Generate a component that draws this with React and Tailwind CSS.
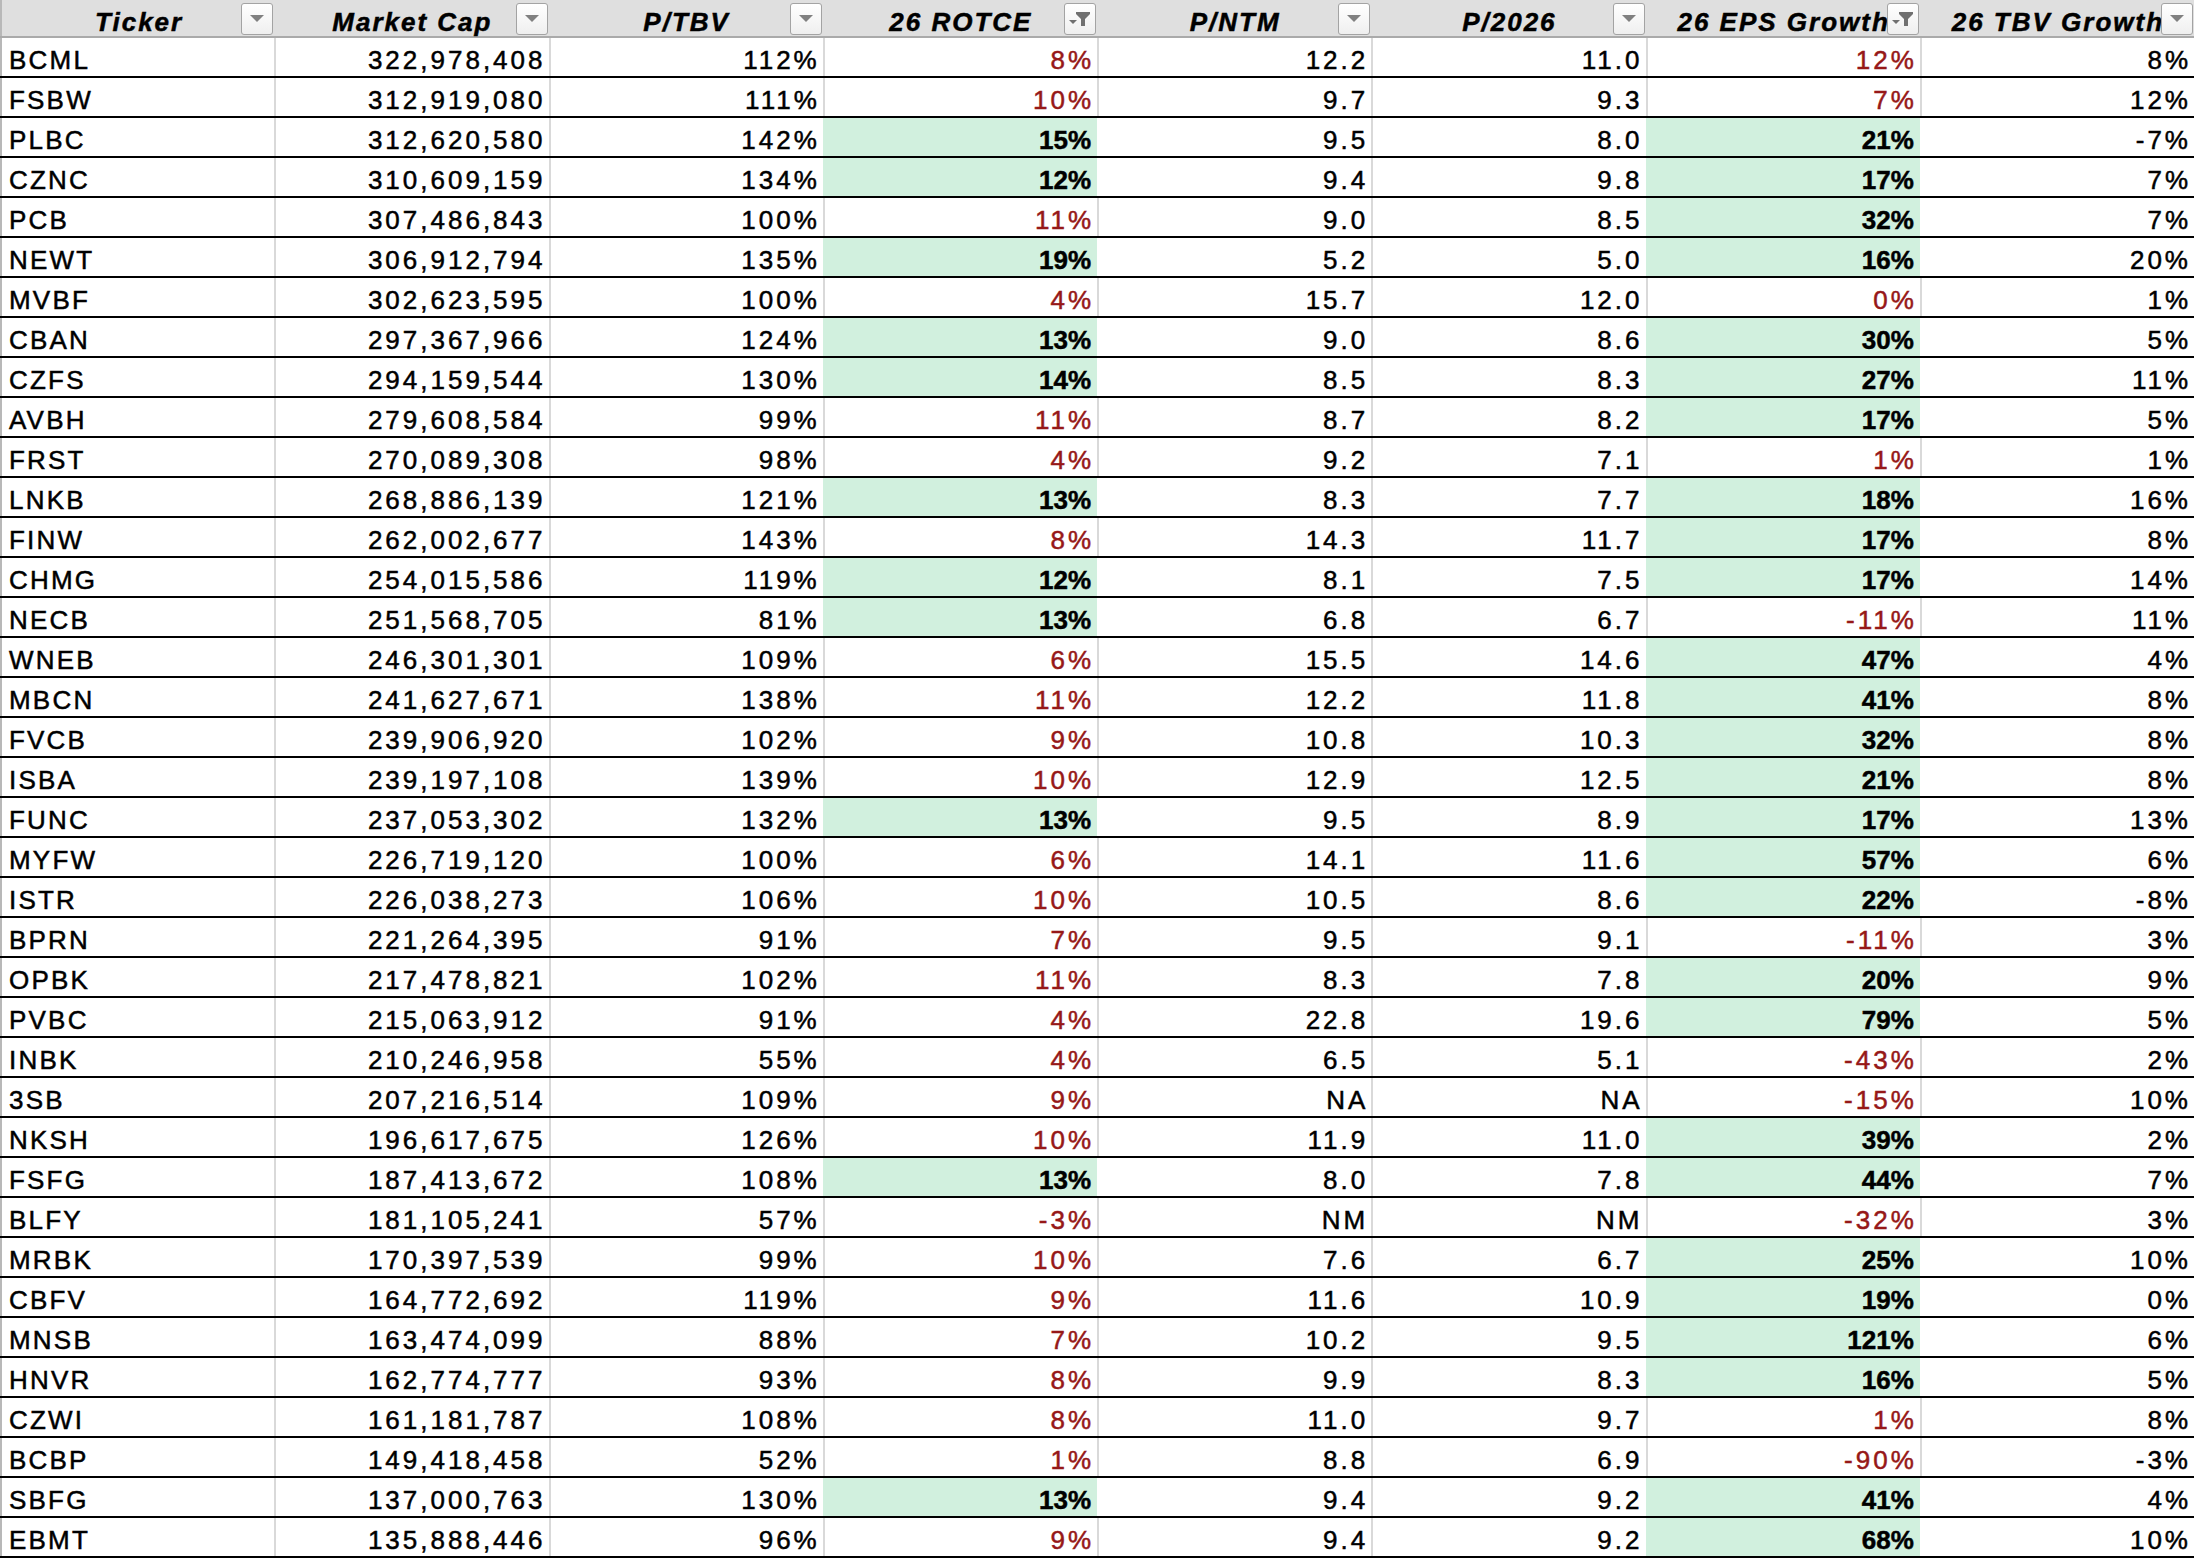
import React from "react";

const headers = [
  { label: "Ticker" },
  { label: "Market Cap" },
  { label: "P/TBV" },
  { label: "26 ROTCE", filtered: true },
  { label: "P/NTM" },
  { label: "P/2026" },
  { label: "26 EPS Growth", filtered: true },
  { label: "26 TBV Growth" },
];

// ticker, market cap, p/tbv, rotce, p/ntm, p/2026, eps growth, tbv growth
const rows = [
  ["BCML", "322,978,408", "112%", 8, "12.2", "11.0", 12, "8%"],
  ["FSBW", "312,919,080", "111%", 10, "9.7", "9.3", 7, "12%"],
  ["PLBC", "312,620,580", "142%", 15, "9.5", "8.0", 21, "-7%"],
  ["CZNC", "310,609,159", "134%", 12, "9.4", "9.8", 17, "7%"],
  ["PCB", "307,486,843", "100%", 11, "9.0", "8.5", 32, "7%"],
  ["NEWT", "306,912,794", "135%", 19, "5.2", "5.0", 16, "20%"],
  ["MVBF", "302,623,595", "100%", 4, "15.7", "12.0", 0, "1%"],
  ["CBAN", "297,367,966", "124%", 13, "9.0", "8.6", 30, "5%"],
  ["CZFS", "294,159,544", "130%", 14, "8.5", "8.3", 27, "11%"],
  ["AVBH", "279,608,584", "99%", 11, "8.7", "8.2", 17, "5%"],
  ["FRST", "270,089,308", "98%", 4, "9.2", "7.1", 1, "1%"],
  ["LNKB", "268,886,139", "121%", 13, "8.3", "7.7", 18, "16%"],
  ["FINW", "262,002,677", "143%", 8, "14.3", "11.7", 17, "8%"],
  ["CHMG", "254,015,586", "119%", 12, "8.1", "7.5", 17, "14%"],
  ["NECB", "251,568,705", "81%", 13, "6.8", "6.7", -11, "11%"],
  ["WNEB", "246,301,301", "109%", 6, "15.5", "14.6", 47, "4%"],
  ["MBCN", "241,627,671", "138%", 11, "12.2", "11.8", 41, "8%"],
  ["FVCB", "239,906,920", "102%", 9, "10.8", "10.3", 32, "8%"],
  ["ISBA", "239,197,108", "139%", 10, "12.9", "12.5", 21, "8%"],
  ["FUNC", "237,053,302", "132%", 13, "9.5", "8.9", 17, "13%"],
  ["MYFW", "226,719,120", "100%", 6, "14.1", "11.6", 57, "6%"],
  ["ISTR", "226,038,273", "106%", 10, "10.5", "8.6", 22, "-8%"],
  ["BPRN", "221,264,395", "91%", 7, "9.5", "9.1", -11, "3%"],
  ["OPBK", "217,478,821", "102%", 11, "8.3", "7.8", 20, "9%"],
  ["PVBC", "215,063,912", "91%", 4, "22.8", "19.6", 79, "5%"],
  ["INBK", "210,246,958", "55%", 4, "6.5", "5.1", -43, "2%"],
  ["3SB", "207,216,514", "109%", 9, "NA", "NA", -15, "10%"],
  ["NKSH", "196,617,675", "126%", 10, "11.9", "11.0", 39, "2%"],
  ["FSFG", "187,413,672", "108%", 13, "8.0", "7.8", 44, "7%"],
  ["BLFY", "181,105,241", "57%", -3, "NM", "NM", -32, "3%"],
  ["MRBK", "170,397,539", "99%", 10, "7.6", "6.7", 25, "10%"],
  ["CBFV", "164,772,692", "119%", 9, "11.6", "10.9", 19, "0%"],
  ["MNSB", "163,474,099", "88%", 7, "10.2", "9.5", 121, "6%"],
  ["HNVR", "162,774,777", "93%", 8, "9.9", "8.3", 16, "5%"],
  ["CZWI", "161,181,787", "108%", 8, "11.0", "9.7", 1, "8%"],
  ["BCBP", "149,418,458", "52%", 1, "8.8", "6.9", -90, "-3%"],
  ["SBFG", "137,000,763", "130%", 13, "9.4", "9.2", 41, "4%"],
  ["EBMT", "135,888,446", "96%", 9, "9.4", "9.2", 68, "10%"],
];

function DropButton({ filtered }) {
  return (
    <div className="absolute right-[1px] top-[3px] z-10 flex h-[32px] w-[32px] items-center justify-center rounded-[3px] border border-[#a3a3a3] bg-gradient-to-b from-white to-[#efefef]">
      {filtered ? (
        <svg width="24" height="18" viewBox="0 0 24 18">
          <polygon points="1,10 9,10 5,14" fill="#707070" />
          <polygon points="8,2 22,2 22,4 17,9 17,16 13,16 13,9 8,4" fill="#707070" />
        </svg>
      ) : (
        <svg width="14" height="8" viewBox="0 0 14 8">
          <polygon points="0,0 14,0 7,7" fill="#808080" />
        </svg>
      )}
    </div>
  );
}

function Header() {
  return (
    <div className="grid h-[38px] grid-cols-8 border-b-2 border-[#aaaaaa] bg-[#dfdfdf]">
      {headers.map((h, i) => (
        <div
          key={h.label}
          className={`relative flex items-end justify-center whitespace-nowrap pb-[1px] text-[26px] font-bold italic leading-[26px] tracking-[2px] text-black [-webkit-text-stroke-width:0.5px] ${
            i === 0 ? "border-l-2 border-[#b8b8b8]" : ""
          }`}
        >
          <span className="pl-[2px]">{h.label}</span>
          <DropButton filtered={h.filtered} />
        </div>
      ))}
    </div>
  );
}

function Cell({ children, kind, first, afterGreen }) {
  let border = "border-l-2 border-[#d9d9d9]";
  if (first) border = "border-l-2 border-[#b8b8b8]";
  else if (kind === "green") border = "border-l-2 border-[#d1f0de]";
  else if (afterGreen) border = "border-l-2 border-white";

  let tone = "bg-white text-black font-normal tracking-[3px] pr-[3px]";
  if (kind === "green") tone = "bg-[#d1f0de] text-black font-bold tracking-[0px] pr-[6px]";
  if (kind === "red") tone = "bg-white text-[#961818] font-normal tracking-[3px] pr-[3px]";
  if (first) tone = "bg-white text-black font-normal tracking-[2.2px] pl-[7px]";

  return (
    <div
      className={`flex items-end whitespace-nowrap pb-[3px] text-[26px] leading-[26px] [-webkit-text-stroke-width:0.5px] ${
        first ? "justify-start" : "justify-end"
      } ${border} ${tone}`}
    >
      {children}
    </div>
  );
}

export default function App() {
  return (
    <div className="w-[2194px] bg-white font-['Liberation_Sans',Arial,sans-serif]">
      <Header />
      {rows.map((r) => {
        const [ticker, cap, ptbv, rotce, pntm, p26, eps, tbv] = r;
        const rotceKind = rotce >= 12 ? "green" : "red";
        const epsKind = eps >= 15 ? "green" : "red";
        return (
          <div key={ticker} className="grid h-[40px] grid-cols-8 border-b-2 border-black">
            <Cell first>{ticker}</Cell>
            <Cell>{cap}</Cell>
            <Cell>{ptbv}</Cell>
            <Cell kind={rotceKind}>{rotce}%</Cell>
            <Cell afterGreen={rotceKind === "green"}>{pntm}</Cell>
            <Cell>{p26}</Cell>
            <Cell kind={epsKind}>{eps}%</Cell>
            <Cell afterGreen={epsKind === "green"}>{tbv}</Cell>
          </div>
        );
      })}
    </div>
  );
}
